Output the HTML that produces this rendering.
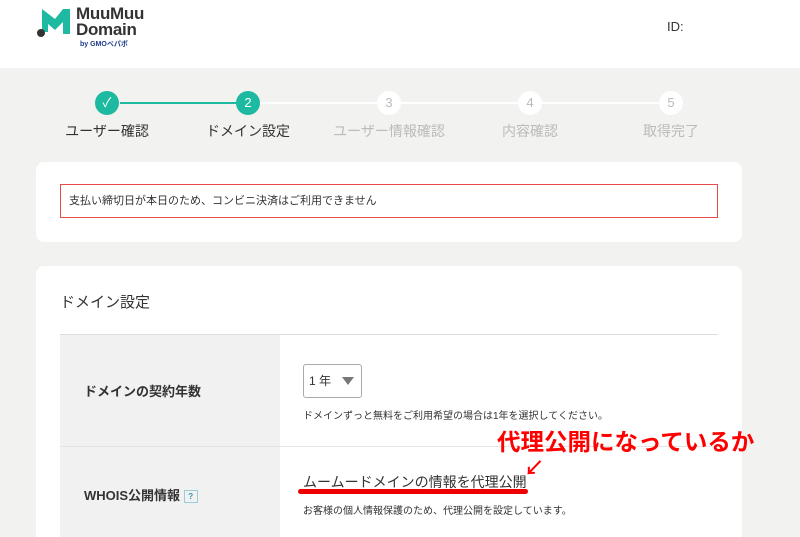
<!DOCTYPE html>
<html><head><meta charset="utf-8"><style>
*{margin:0;padding:0;box-sizing:border-box}
html,body{width:800px;height:537px;overflow:hidden}
body{background:#f2f2f0;font-family:"Liberation Sans","Noto Sans CJK JP",sans-serif;color:#333;position:relative}
.hd{position:absolute;left:0;top:0;width:800px;height:68px;background:#fff}
.abs{position:absolute}
.c{position:absolute;width:24px;height:24px;border-radius:50%;text-align:center;line-height:24px;font-size:13px;color:#fff}
.lbl{position:absolute;top:121px;font-size:14px;width:140px;text-align:center}
.card{position:absolute;background:#fff;border-radius:8px;overflow:hidden}
</style></head><body>
<div class="hd">
<svg class="abs" style="left:35px;top:7px" width="38" height="30" viewBox="0 0 38 30"><path d="M7 2 L20 12 L28 2 L35 2 L35 27 L28 27 L28 15 L20 23 L13 17 L13 25 L7 25 Z" fill="#1db9a0"/><circle cx="6" cy="26" r="4" fill="#333"/></svg>
<div class="abs" style="left:76px;top:6px;font-size:17px;font-weight:bold;line-height:16px;color:#333;letter-spacing:-0.3px">MuuMuu<br>Domain</div>
<div class="abs" style="left:80px;top:39px;font-size:7px;font-weight:bold;color:#1e3a8a">by GMOペパボ</div>
<div class="abs" style="left:667px;top:19px;font-size:13px">ID:</div>
</div>
<div class="abs" style="left:120px;top:102px;width:120px;height:2px;background:#1db9a0"></div>
<div class="abs" style="left:260px;top:102px;width:400px;height:2px;background:#fff"></div>
<div class="c" style="left:95px;top:91px;background:#1db9a0">✓</div>
<div class="c" style="left:236px;top:91px;background:#1db9a0">2</div>
<div class="c" style="left:377px;top:91px;background:#fff;color:#bbb">3</div>
<div class="c" style="left:518px;top:91px;background:#fff;color:#bbb">4</div>
<div class="c" style="left:659px;top:91px;background:#fff;color:#bbb">5</div>
<div class="lbl" style="left:37px">ユーザー確認</div>
<div class="lbl" style="left:178px">ドメイン設定</div>
<div class="lbl" style="left:319px;color:#bbb">ユーザー情報確認</div>
<div class="lbl" style="left:460px;color:#bbb">内容確認</div>
<div class="lbl" style="left:601px;color:#bbb">取得完了</div>
<div class="card" style="left:36px;top:162px;width:706px;height:80px">
<div class="abs" style="left:24px;top:22px;width:658px;height:34px;border:1px solid #e84a4a;font-size:11px;line-height:32px;padding-left:8px">支払い締切日が本日のため、コンビニ決済はご利用できません</div>
</div>
<div class="card" style="left:36px;top:266px;width:706px;height:271px;border-radius:8px 8px 0 0">
<div class="abs" style="left:24px;top:25px;font-size:15px">ドメイン設定</div>
<div class="abs" style="left:24px;top:68px;width:658px;height:1px;background:#ddd"></div>
<div class="abs" style="left:24px;top:69px;width:220px;height:202px;background:#f1f1f1"></div>
<div class="abs" style="left:24px;top:180px;width:658px;height:1px;background:#e4e4e4"></div>
<div class="abs" style="left:48px;top:115px;font-size:13px;font-weight:bold">ドメインの契約年数</div>
<div class="abs" style="left:48px;top:219px;font-size:13px;font-weight:bold">WHOIS公開情報 <span style="display:inline-block;width:14px;height:13px;border:1px solid #9cd;font-size:8px;color:#39a;text-align:center;line-height:11px;vertical-align:middle">?</span></div>
<div class="abs" style="left:267px;top:98px;width:59px;height:34px;border:1px solid #aaa;border-radius:3px;font-size:12px;line-height:32px;padding-left:5px">1 年<span style="position:absolute;left:38px;top:12px;border:6px solid transparent;border-top:8px solid #777;border-bottom:0"></span></div>
<div class="abs" style="left:267px;top:141px;font-size:10px">ドメインずっと無料をご利用希望の場合は1年を選択してください。</div>
<div class="abs" style="left:267px;top:206px;font-size:14px">ムームードメインの情報を代理公開</div>
<div class="abs" style="left:262px;top:223px;width:230px;height:5px;background:#e00;border-radius:3px"></div>
<div class="abs" style="left:267px;top:236px;font-size:10px">お客様の個人情報保護のため、代理公開を設定しています。</div>
</div>
<div class="abs" style="left:497px;top:423px;font-size:23.5px;font-weight:bold;color:#f00;white-space:nowrap">代理公開になっているか</div>
<div class="abs" style="left:524px;top:452px;font-size:20px;font-weight:bold;color:#f00">↙</div>
</body></html>
